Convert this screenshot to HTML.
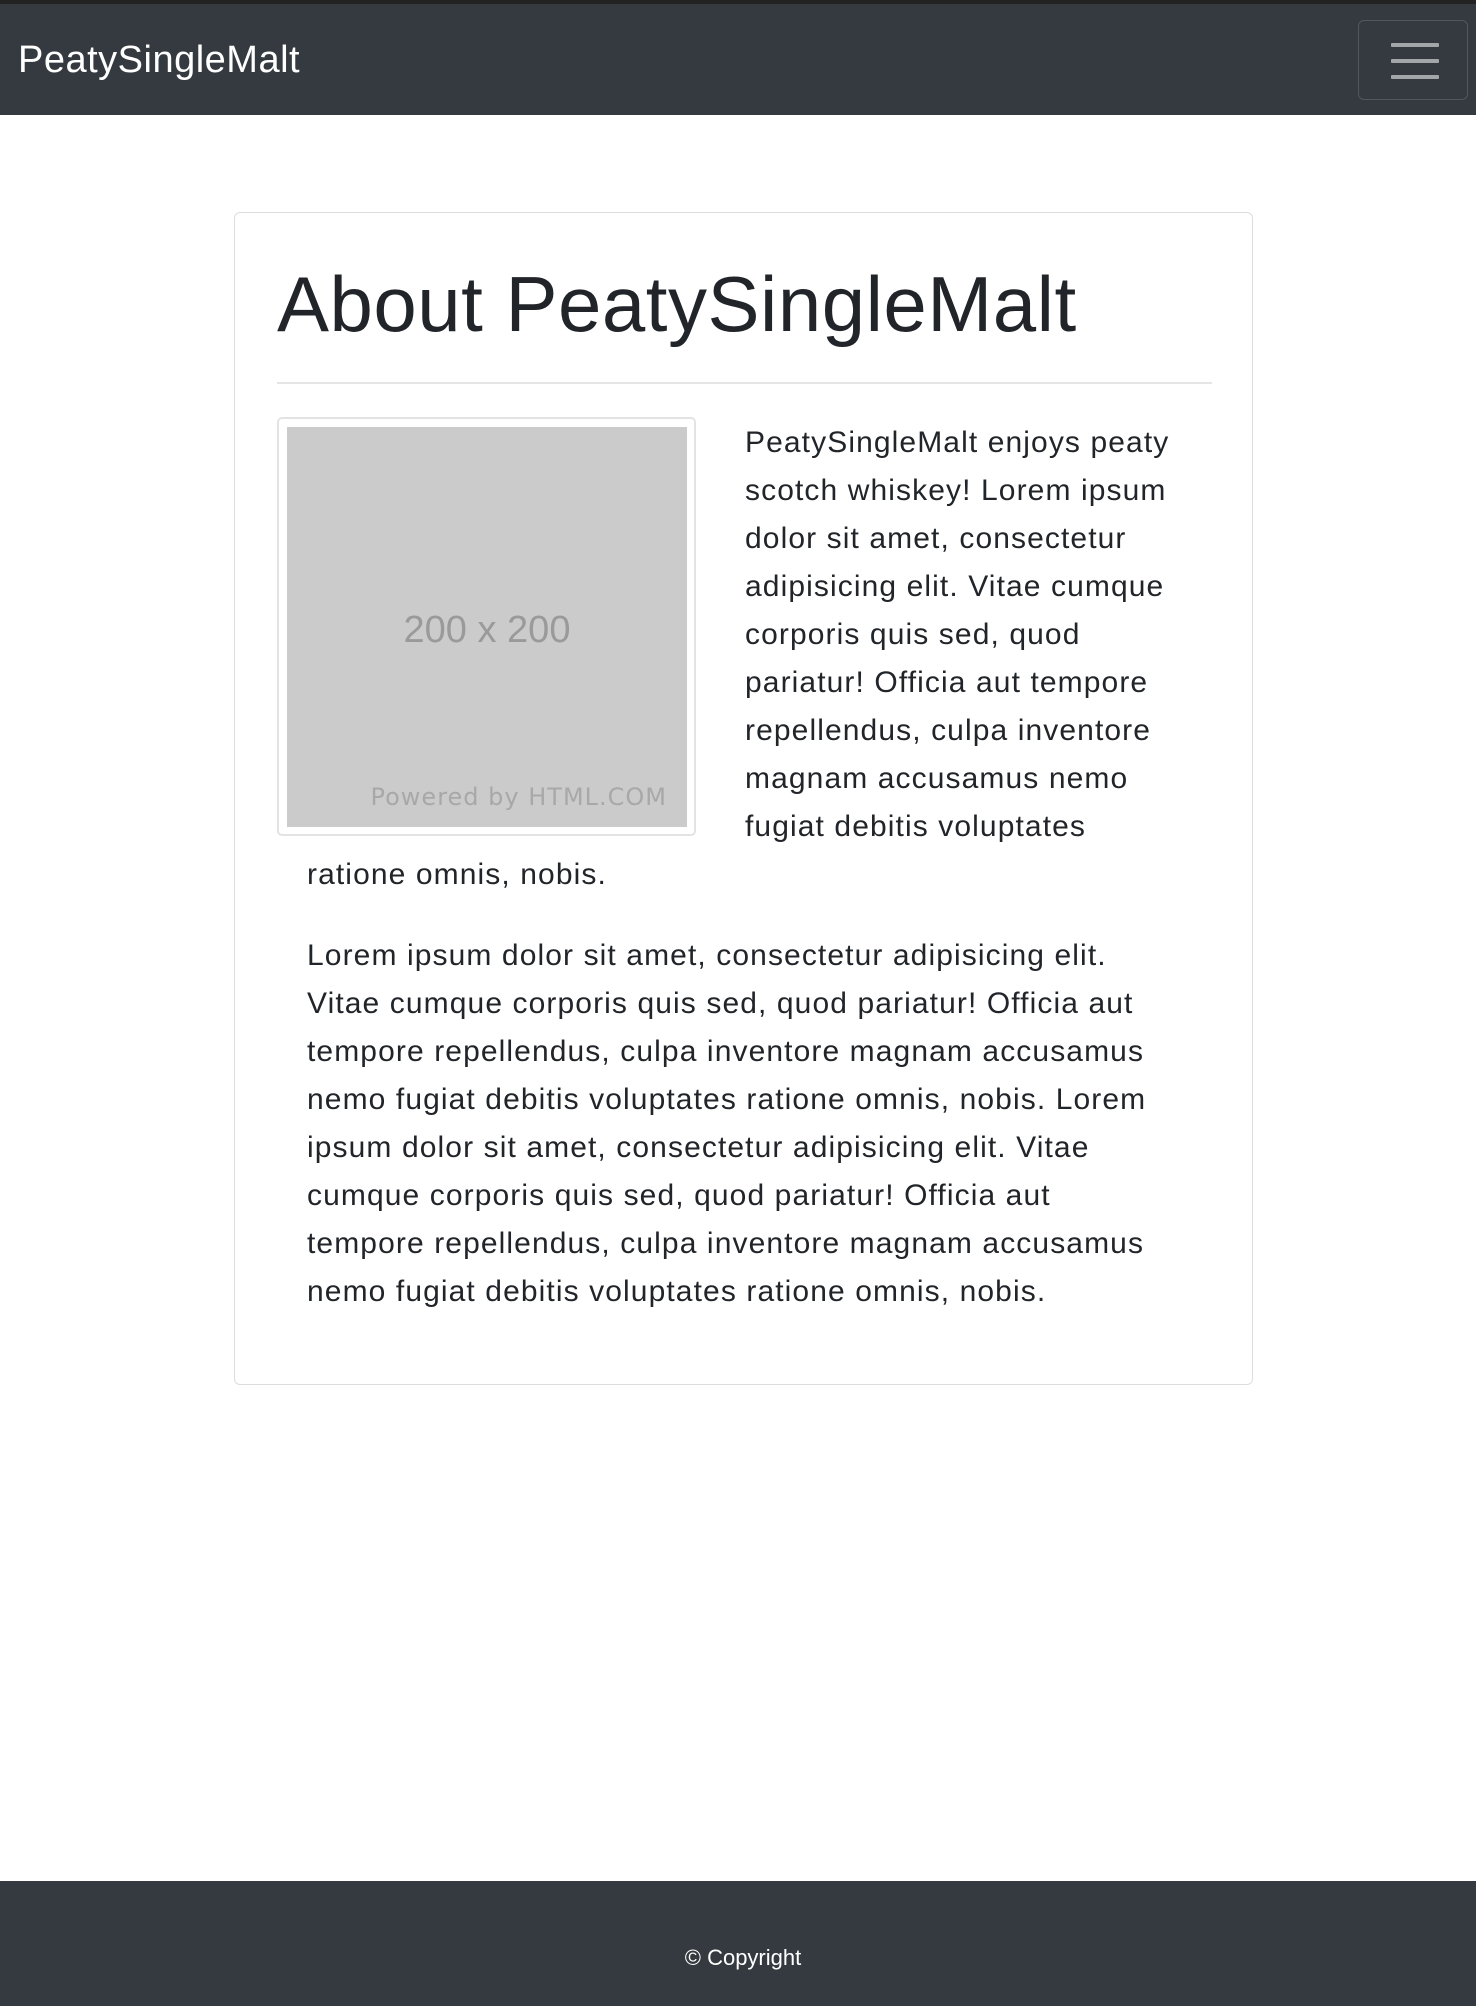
<!DOCTYPE html>
<html><head><meta charset="utf-8"><style>
*{box-sizing:border-box;margin:0;padding:0}
html,body{width:1476px;height:2006px;background:#fff;overflow:hidden}
body{font-family:"Liberation Sans",sans-serif;color:#212529;position:relative}
.topline{position:absolute;left:0;top:0;width:1476px;height:4px;background:#222}
.nav{position:absolute;left:0;top:4px;width:1476px;height:111px;background:#343a40}
.brand{position:absolute;left:18px;top:34px;font-size:38px;color:#fff;letter-spacing:0.5px;line-height:44px}
.tog{position:absolute;left:1358px;top:16px;width:110px;height:80px;border:1.5px solid rgba(255,255,255,.15);border-radius:6px}
.tog i{position:absolute;left:32px;width:48px;height:4px;background:rgba(255,255,255,.55);border-radius:1px}
.card{position:absolute;left:234px;top:212px;width:1019px;height:1173px;border:1.5px solid #ddd;border-radius:6px}
h1{position:absolute;left:42px;top:46px;font-size:78px;font-weight:500;letter-spacing:0.5px;line-height:90px;white-space:nowrap}
.hr{position:absolute;left:42px;top:169px;width:935px;height:2px;background:#e5e5e5}
.body{position:absolute;left:42px;top:204px;width:935px}
.img{float:left;width:419px;height:419px;border:2px solid #e3e3e3;border-radius:5px;padding:8px;margin-right:49px;margin-bottom:8px;background:#fff}
.ph{width:400px;height:400px;background:#cbcbcb;position:relative}
.ph .a{position:absolute;left:0;width:100%;top:182px;text-align:center;font-size:38px;color:#9a9a9a}
.ph .b{position:absolute;right:20px;top:356px;font-size:24px;color:#a8a8a8;letter-spacing:1px;font-family:"DejaVu Sans",sans-serif}
p{font-size:30px;letter-spacing:1.1px;line-height:48px;padding-left:30px;padding-right:52px;margin-bottom:33px}
p.f{padding-right:0;white-space:nowrap}
.foot{position:absolute;left:0;top:1881px;width:1476px;height:125px;background:#343a40;color:#fff;text-align:center;font-size:22px;line-height:30px;padding-top:62px;padding-left:10px}
</style></head><body>
<div class="topline"></div>
<div class="nav"><div class="brand">PeatySingleMalt</div>
<div class="tog"><i style="top:22px"></i><i style="top:38px"></i><i style="top:54px"></i></div></div>
<div class="card">
<h1>About PeatySingleMalt</h1>
<div class="hr"></div>
<div class="body">
<div class="img"><div class="ph"><div class="a">200 x 200</div><div class="b">Powered by HTML.COM</div></div></div>
<p class="f" style="padding-top:2px">PeatySingleMalt enjoys peaty<br>scotch whiskey! Lorem ipsum<br>dolor sit amet, consectetur<br>adipisicing elit. Vitae cumque<br>corporis quis sed, quod<br>pariatur! Officia aut tempore<br>repellendus, culpa inventore<br>magnam accusamus nemo<br>fugiat debitis voluptates<br>ratione omnis, nobis.</p>
<p>Lorem ipsum dolor sit amet, consectetur adipisicing elit. Vitae cumque corporis quis sed, quod pariatur! Officia aut tempore repellendus, culpa inventore magnam accusamus nemo fugiat debitis voluptates ratione omnis, nobis. Lorem ipsum dolor sit amet, consectetur adipisicing elit. Vitae cumque corporis quis sed, quod pariatur! Officia aut tempore repellendus, culpa inventore magnam accusamus nemo fugiat debitis voluptates ratione omnis, nobis.</p>
</div></div>
<div class="foot">© Copyright</div>
</body></html>
